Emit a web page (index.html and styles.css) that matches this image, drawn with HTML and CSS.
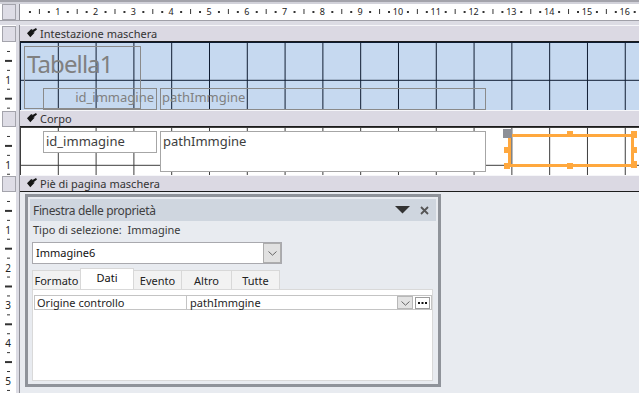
FILE: index.html
```html
<!DOCTYPE html>
<html lang="it">
<head>
    <meta charset="UTF-8">
    <meta name="viewport" content="width=device-width, initial-scale=1.0">
    <title>Maschera1 - Visualizzazione Struttura</title>
    <link rel="stylesheet" href="styles.css">
</head>
<body>
    <div class="designer">
        <div class="top-strip"></div>

        <div class="row ruler-row">
            <div class="lcell"><span class="corner-box"></span></div>
            <div class="hruler">
                <span>1</span><span>2</span><span>3</span><span>4</span>
                <span>5</span><span>6</span><span>7</span><span>8</span>
                <span>9</span><span>10</span><span>11</span><span>12</span>
                <span>13</span><span>14</span><span>15</span><span>16</span>
            </div>
        </div>
        <div class="gap-row"></div>

        <!-- Intestazione -->
        <div class="row bar-row">
            <div class="lcell"><span class="sel-box"></span></div>
            <div class="bar">
                <svg class="bar-icon" viewBox="0 0 10 10" width="10" height="10"><path d="M0 5.2 L4 1.2 L5.6 1.2 L4.7 2.6 L9 0 L10 1.4 L6.3 4.4 L7.8 4.4 L3.3 9.2 Z"/></svg>
                Intestazione maschera
            </div>
        </div>
        <div class="row header-row">
            <div class="lcell vruler"><div class="vnums"><span>1</span></div></div>
            <div class="canvas canvas-header">
                <div class="ctl title-label">Tabella1</div>
                <div class="ctl label id-label">id_immagine</div>
                <div class="ctl label path-label">pathImmgine</div>
            </div>
        </div>

        <!-- Corpo -->
        <div class="row bar-row">
            <div class="lcell"><span class="sel-box"></span></div>
            <div class="bar">
                <svg class="bar-icon" viewBox="0 0 10 10" width="10" height="10"><path d="M0 5.2 L4 1.2 L5.6 1.2 L4.7 2.6 L9 0 L10 1.4 L6.3 4.4 L7.8 4.4 L3.3 9.2 Z"/></svg>
                Corpo
            </div>
        </div>
        <div class="row body-row">
            <div class="lcell vruler"><div class="vnums"><span>1</span></div></div>
            <div class="canvas canvas-body">
                <div class="ctl textbox id-box">id_immagine</div>
                <div class="ctl textbox path-box">pathImmgine</div>

                <div class="sel-frame"></div>
                <span class="handle move-handle"></span>
                <span class="handle h-tm"></span>
                <span class="handle h-tr"></span>
                <span class="handle h-ml"></span>
                <span class="handle h-mr"></span>
                <span class="handle h-bl"></span>
                <span class="handle h-bm"></span>
                <span class="handle h-br"></span>
            </div>
        </div>

        <!-- Piè di pagina -->
        <div class="row bar-row">
            <div class="lcell"><span class="sel-box"></span></div>
            <div class="bar">
                <svg class="bar-icon" viewBox="0 0 10 10" width="10" height="10"><path d="M0 5.2 L4 1.2 L5.6 1.2 L4.7 2.6 L9 0 L10 1.4 L6.3 4.4 L7.8 4.4 L3.3 9.2 Z"/></svg>
                Piè di pagina maschera
            </div>
        </div>
        <div class="row footer-row">
            <div class="lcell vruler">
                <div class="vnums"><span>1</span><span>2</span><span>3</span><span>4</span><span>5</span></div>
            </div>
            <div class="empty-area">
                <div class="prop-window">
                    <div class="prop-title">
                        <span class="prop-title-text">Finestra delle proprietà</span>
                        <svg class="title-menu" viewBox="0 0 15 8" width="15" height="8"><polygon points="0,0 15,0 7.5,7.5"/></svg>
                        <svg class="title-close" viewBox="0 0 9 9" width="9" height="9"><path d="M1 1 L8 8 M8 1 L1 8"/></svg>
                    </div>
                    <div class="sel-type">Tipo di selezione:&nbsp; Immagine</div>
                    <div class="combo">
                        <span class="combo-text">Immagine6</span>
                        <span class="combo-btn"><svg viewBox="0 0 9 5" width="9" height="5"><path d="M0.5 0.5 L4.5 4.2 L8.5 0.5"/></svg></span>
                    </div>
                    <div class="tabs">
                        <span class="tab tab-formato">Formato</span>
                        <span class="tab tab-dati active">Dati</span>
                        <span class="tab tab-evento">Evento</span>
                        <span class="tab tab-altro">Altro</span>
                        <span class="tab tab-tutte">Tutte</span>
                    </div>
                    <div class="tab-panel">
                        <div class="prop-row">
                            <span class="prop-name">Origine controllo</span>
                            <span class="prop-value">pathImmgine</span>
                            <span class="row-drop"><svg viewBox="0 0 9 5" width="9" height="5"><path d="M0.5 0.5 L4.5 4.2 L8.5 0.5"/></svg></span>
                            <span class="row-build"><svg viewBox="0 0 9 3" width="9" height="3"><rect x="0" y="0" width="2" height="2"/><rect x="3.5" y="0" width="2" height="2"/><rect x="7" y="0" width="2" height="2"/></svg></span>
                        </div>
                    </div>
                </div>
            </div>
        </div>
    </div>
</body>
</html>
```

FILE: styles.css
```css
* {
    margin: 0;
    padding: 0;
    box-sizing: border-box;
}

body {
    font-family: "Noto Sans", "DejaVu Sans", sans-serif;
    background: #e8ebf0;
    overflow: hidden;
}

.designer {
    width: 639px;
    height: 393px;
    display: flex;
    flex-direction: column;
    overflow: hidden;
}

.top-strip {
    height: 4px;
    flex: none;
    background: #d2d2da;
    border-top: 2px solid #a3a3ab;
}

.row {
    display: flex;
    flex: none;
}

/* left column: vertical ruler + separator */
.lcell {
    width: 20px;
    flex: none;
    overflow: hidden;
    background-color: #fff;
    border-right: 1px solid #8e8e96;
    box-shadow: inset -3px 0 #dcdce4;
}

.ruler-row {
    height: 17px;
    border-bottom: 1px solid #a0a0a8;
}

.corner-box {
    display: block;
    margin-left: 2px;
    width: 14px;
    height: 16px;
    border: 1px solid #a4a4ac;
    background: #dedde6;
}

.hruler {
    flex: 1;
    display: flex;
    padding-left: 18.9px;
    font-size: 9px;
    line-height: 16px;
    color: #222;
    background-color: #fff;
    background-image:
        linear-gradient(to right, transparent 9px, #333 9px, #333 10.5px, transparent 10.5px, transparent 28px, #333 28px, #333 29.5px, transparent 29.5px),
        linear-gradient(to right, transparent 18.5px, #333 18.5px, #333 19.5px, transparent 19.5px);
    background-size: 37.8px 2px, 37.8px 5px;
    background-position: 0 7px, 0 5px;
    background-repeat: repeat-x;
}

.hruler span {
    flex: none;
    width: 37.8px;
    text-align: center;
}

.gap-row {
    height: 4px;
    flex: none;
    background: #dcdce4;
}

/* section bars */
.bar-row {
    height: 17px;
}

.sel-box {
    display: block;
    margin: 1px 0 0 2px;
    width: 14px;
    height: 16px;
    border: 1px solid #a4a4ac;
    background: #dedde6;
}

.bar {
    flex: 1;
    display: flex;
    align-items: center;
    gap: 3px;
    padding-left: 7px;
    font-size: 11px;
    color: #333;
    background: #dbd9e3;
    border-top: 1px solid #f6f6f9;
    border-bottom: 1px solid #1c1c1c;
}

.bar-icon {
    fill: #151515;
    margin-top: -1px;
}

/* vertical ruler ticks */
.vruler {
    background-image:
        linear-gradient(to bottom, transparent 9px, #333 9px, #333 10px, transparent 10px, transparent 28px, #333 28px, #333 29px, transparent 29px),
        linear-gradient(to bottom, transparent 18.4px, #333 18.4px, #333 19.4px, transparent 19.4px);
    background-size: 3px 37.8px, 7px 37.8px;
    background-position: 7px 0, 5px 0;
    background-repeat: repeat-y;
}

.vnums {
    padding-top: 30.8px;
    width: 16px;
    font-size: 10px;
    color: #222;
}

.vnums span {
    display: block;
    height: 14px;
    line-height: 14px;
    text-align: center;
}

.vnums span + span {
    margin-top: 23.8px;
}

.header-row {
    height: 68px;
}

.body-row {
    height: 48px;
}

/* design surface */
.canvas {
    flex: 1;
    position: relative;
    background-position: 1px 1px;
}

.canvas-header {
    background-color: #c6d9f0;
    background-image:
        linear-gradient(to right, transparent 36.8px, #0e1b30 36.8px),
        linear-gradient(to bottom, transparent 36.8px, #0e1b30 36.8px);
    background-size: 37.8px 100%, 100% 37.8px;
}

.canvas-body {
    background-color: #fff;
    background-image:
        linear-gradient(to right, transparent 36.8px, #3c3c3c 36.8px),
        linear-gradient(to bottom, transparent 36.8px, #3c3c3c 36.8px);
    background-size: 37.8px 100%, 100% 37.8px;
}

.ctl {
    position: absolute;
    white-space: nowrap;
    overflow: hidden;
}

.title-label {
    left: 4px;
    top: 4px;
    width: 117px;
    height: 63px;
    border: 1px solid #8a8a8a;
    padding-left: 2px;
    font-size: 24px;
    letter-spacing: -0.9px;
    color: #808080;
    line-height: 33px;
}

.label {
    top: 46px;
    height: 22px;
    border: 1px solid #8a8a8a;
    font-size: 13px;
    line-height: 17px;
    color: #808080;
}

.id-label {
    left: 23px;
    width: 114px;
    text-align: right;
    padding-right: 2px;
}

.path-label {
    left: 140px;
    width: 326px;
    padding-left: 1px;
}

.textbox {
    top: 4px;
    background: #fff;
    border: 1px solid #a6a6a6;
    font-size: 13px;
    line-height: 17px;
    color: #3e3e3e;
    padding: 1px 2px 0;
}

.id-box {
    left: 23px;
    width: 114px;
    height: 22px;
}

.path-box {
    left: 140px;
    width: 326px;
    height: 41px;
}

/* selected image control */
.sel-frame {
    position: absolute;
    left: 488px;
    top: 7px;
    width: 126px;
    height: 33px;
    border: 3px solid #ffa83e;
}

.handle {
    position: absolute;
    width: 6px;
    height: 6px;
    background: #ffa83e;
}

.move-handle {
    left: 483px;
    top: 2px;
    width: 9px;
    height: 9px;
    background: #8d9097;
}

.h-tm { left: 547px; top: 4px; }
.h-tr { left: 611px; top: 4px; height: 7px; }
.h-ml { left: 484px; top: 20px; }
.h-mr { left: 611px; top: 20px; }
.h-bl { left: 484px; top: 36px; }
.h-bm { left: 547px; top: 36px; }
.h-br { left: 611px; top: 34px; height: 7px; }

/* empty area below the form */
.footer-row {
    flex: 1;
    min-height: 0;
}

.empty-area {
    flex: 1;
    background: #e8ebf0;
}

/* property sheet */
.prop-window {
    margin: 2px 0 0 5px;
    width: 416px;
    height: 193px;
    border: 3px solid #8f939a;
    background: #e8ebf0;
    padding: 2px 2px 3px;
    font-size: 11px;
    color: #222;
}

.prop-title {
    height: 22px;
    display: flex;
    align-items: center;
    padding: 0 7px 0 3px;
    background: #cfd6df;
}

.prop-title-text {
    flex: 1;
    font-size: 12px;
    letter-spacing: -0.35px;
    color: #3f3f3f;
}

.title-menu {
    fill: #333;
    margin-right: 10px;
}

.title-close {
    stroke: #555;
    stroke-width: 1.8;
}

.sel-type {
    height: 16px;
    line-height: 15px;
    padding: 1px 3px 0;
    color: #3a3a3a;
}

.combo {
    margin: 5px 0 0 2px;
    width: 250px;
    height: 22px;
    display: flex;
    background: #fff;
    border: 1px solid #a9a9ae;
}

.combo-text {
    flex: 1;
    padding-left: 3px;
    line-height: 19px;
    color: #111;
}

.combo-btn {
    width: 18px;
    display: flex;
    align-items: center;
    justify-content: center;
    background: #e1e1e1;
    border: 1px solid #adadad;
}

.combo-btn svg,
.row-drop svg {
    fill: none;
    stroke: #666;
    stroke-width: 1;
}

.tabs {
    margin: 4px 0 0 2px;
    height: 21px;
    display: flex;
    align-items: flex-end;
}

.tab {
    height: 19px;
    margin-right: -1px;
    text-align: center;
    line-height: 19px;
    background: #f2f2f2;
    border: 1px solid #d8d8d8;
    border-bottom: none;
    color: #222;
}

.tab.active {
    height: 21px;
    line-height: 18px;
    background: #fff;
    position: relative;
    color: #111;
}

.tab-formato { width: 49px; }
.tab-dati { width: 54px; }
.tab-evento { width: 49px; }
.tab-altro { width: 51px; }
.tab-tutte { width: 49px; }

.tab-panel {
    margin-left: 2px;
    width: 401px;
    height: 92px;
    background: #fff;
    border: 1px solid #d9d9d9;
    padding: 5px 0 0 1px;
}

.prop-row {
    width: 398px;
    height: 15px;
    display: flex;
    align-items: center;
    border: 1px solid #c4c4c4;
    line-height: 13px;
    color: #1e1e1e;
}

.prop-name {
    width: 152px;
    height: 13px;
    padding-left: 2px;
    border-right: 1px solid #c4c4c4;
}

.prop-value {
    flex: 1;
    padding-left: 3px;
}

.row-drop {
    width: 16px;
    height: 13px;
    display: flex;
    align-items: flex-end;
    justify-content: center;
    padding-bottom: 2px;
    background: #e3e3e3;
    border: 1px solid #b8b8b8;
}

.row-build {
    width: 15px;
    height: 12px;
    margin: 0 1px 0 2px;
    display: flex;
    align-items: flex-end;
    justify-content: center;
    padding-bottom: 3px;
    background: #fff;
    border: 1px solid #9d9d9d;
}

.row-build svg {
    fill: #111;
}
```
